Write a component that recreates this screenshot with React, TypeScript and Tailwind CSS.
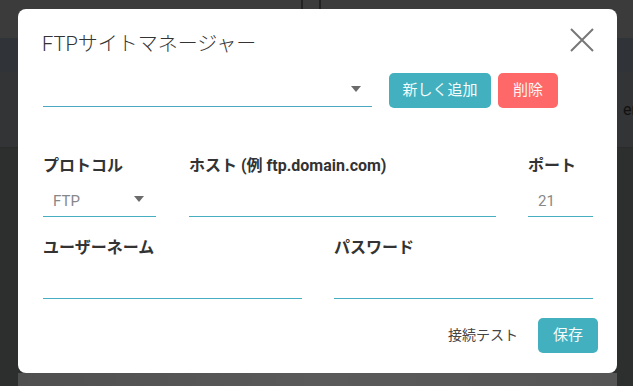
import React from 'react';

// FTP site manager dialog over a dimmed app background

const font = { fontFamily: '"Roboto", "Noto Sans CJK JP", sans-serif' };

function Caret() {
  return (
    <svg width="10" height="6" viewBox="0 0 10 6" className="shrink-0">
      <path d="M0 0 L10 0 L5 6 Z" fill="#6b6b6b" />
    </svg>
  );
}

function Field({ label, width, children }: { label: string; width: string; children?: React.ReactNode }) {
  return (
    <div className={`flex flex-col ${width}`}>
      <div className="h-[20px] text-[16px] leading-[20px] font-bold text-[#333]">{label}</div>
      <div className="mt-[5px] h-[36px] border-b border-[#45aec1] flex items-center">{children}</div>
    </div>
  );
}

export default function App() {
  return (
    <div className="relative w-[633px] h-[386px] overflow-hidden bg-[#2d2f2f]" style={font}>
      {/* dimmed app behind */}
      <div className="flex flex-col h-full">
        <div className="h-[38px] bg-[#3b3b3b] flex">
          <div className="w-[301px]" />
          <div className="w-[2px] bg-[#222]" />
          <div className="w-[16px]" />
          <div className="w-[2px] bg-[#222]" />
        </div>
        <div className="h-[34px] bg-[#303337]" />
        <div className="h-[76px] bg-[#333435] flex items-center justify-end border-b border-[#2a2a2a]">
          <span className="text-[16px] text-[#111] -mr-[4px]">er</span>
        </div>
        <div className="flex-1 bg-[#2d2f2f]" />
        <div className="h-[13px] flex">
          <div className="w-[18px] bg-[#2d2f2f]" />
          <div className="flex-1 bg-gradient-to-r from-[#4f4f4f] via-[#5a5a5a] to-[#555]" />
          <div className="w-[16px] bg-[#2d2f2f]" />
        </div>
      </div>

      {/* dialog */}
      <div className="absolute left-[18px] top-[9px] w-[599px] h-[364px] bg-white rounded-lg pl-[25px] pr-[24px] flex flex-col">
        <div className="mt-[25px] h-[20px] flex items-center justify-between">
          <div className="-ml-[1px] text-[20px] leading-[20px] font-light text-[#333]">FTPサイトマネージャー</div>
          <svg width="24" height="24" viewBox="0 0 24 24" className="-mr-[1px] -mt-[9px]">
            <path d="M1 1 L23 23 M23 1 L1 23" stroke="#777" strokeWidth="2" />
          </svg>
        </div>

        <div className="mt-[19px] h-[35px] flex items-end">
          <div className="w-[329px] h-[34px] border-b border-[#4aa9bf] flex items-center justify-end pr-[11px] pb-[2px] mb-[1px]">
            <Caret />
          </div>
          <button className="ml-[17px] self-start w-[102px] h-[35px] rounded-[5px] bg-[#42b0be] text-[#f4fbfc] text-[15px]">
            新しく追加
          </button>
          <button className="ml-[7px] self-start w-[60px] h-[35px] rounded-[5px] bg-[#ff6868] text-[#fff4f4] text-[15px]">
            削除
          </button>
        </div>

        <div className="mt-[48px] flex gap-[33px]">
          <Field label="プロトコル" width="w-[113px]">
            <div className="flex-1 flex items-center justify-between pl-[10px] pr-[12px]">
              <span className="text-[15px] text-[#888] mt-[6px]">FTP</span>
              <Caret />
            </div>
          </Field>
          <div className="flex gap-[32px]">
            <Field label="ホスト (例 ftp.domain.com)" width="w-[307px]" />
            <Field label="ポート" width="w-[65px]">
              <span className="pl-[10px] text-[15px] text-[#888] mt-[6px]">21</span>
            </Field>
          </div>
        </div>

        <div className="mt-[21px] flex gap-[32px]">
          <Field label="ユーザーネーム" width="w-[259px]" />
          <Field label="パスワード" width="w-[259px]" />
        </div>

        <div className="mt-[19px] flex items-center justify-end -mr-[5px]">
          <span className="text-[14px] text-[#444] mr-[20px]">接続テスト</span>
          <button className="w-[60px] h-[35px] rounded-[5px] bg-[#42b0be] text-[#f4fbfc] text-[15px]">保存</button>
        </div>
      </div>
    </div>
  );
}
